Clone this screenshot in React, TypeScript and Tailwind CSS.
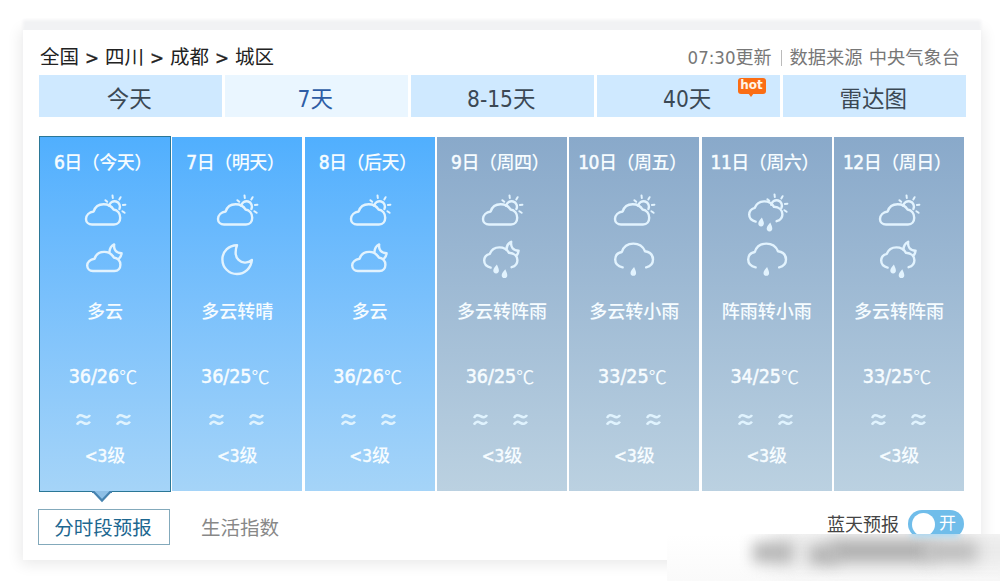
import React from 'react';
import clsx from 'clsx';

type IconName = 'cloudSun' | 'cloudMoon' | 'moon' | 'showerDay' | 'showerNight' | 'rain';

interface Day {
  date: string;
  label: string;
  icons: [IconName, IconName];
  weather: string;
  temp: string;
  tone: 'blue' | 'gray';
  active?: boolean;
}

const days: Day[] = [
  { date: '6', label: '今天', icons: ['cloudSun', 'cloudMoon'], weather: '多云', temp: '36/26', tone: 'blue', active: true },
  { date: '7', label: '明天', icons: ['cloudSun', 'moon'], weather: '多云转晴', temp: '36/25', tone: 'blue' },
  { date: '8', label: '后天', icons: ['cloudSun', 'cloudMoon'], weather: '多云', temp: '36/26', tone: 'blue' },
  { date: '9', label: '周四', icons: ['cloudSun', 'showerNight'], weather: '多云转阵雨', temp: '36/25', tone: 'gray' },
  { date: '10', label: '周五', icons: ['cloudSun', 'rain'], weather: '多云转小雨', temp: '33/25', tone: 'gray' },
  { date: '11', label: '周六', icons: ['showerDay', 'rain'], weather: '阵雨转小雨', temp: '34/25', tone: 'gray' },
  { date: '12', label: '周日', icons: ['cloudSun', 'showerNight'], weather: '多云转阵雨', temp: '33/25', tone: 'gray' },
];

const tabs = ['今天', '7天', '8-15天', '40天', '雷达图'];

const Sun = () => (
  <>
    <path d="M26.2 15.8a5.4 5.4 0 1 1 10.2 3.2" />
    <path
      strokeWidth="2"
      d="M22.4 10.2l1.8 1.6M29.5 5.4l.3 2.6M37.6 7.2l-1.3 2.2M42.4 14.7l-2.5.3M41.6 22.8l-2.2-1.6"
    />
  </>
);

const MoonTip = () => <path d="M26.4 12.2c.2-3.6 1.8-6.4 4.8-7.8c-.8 5.4 2 8.8 7.4 8.8c-.2 2-1 3.8-2.4 5.2" />;

const Drop: React.FC<{ x: number; y: number }> = ({ x, y }) => (
  <path
    transform={`translate(${x} ${y})`}
    d="M.9-4.4C-.8-2.2-2.7-.3-2.7 1.6a2.8 2.8 0 0 0 5.6 0C2.9-.3 1.7-2.2.9-4.4z"
    fill="currentColor"
    stroke="none"
  />
);

const shower = 'M10.6 27.6C6.4 26.6 4.2 24 4.2 20.6c0-3.2 2-5.8 5.6-6.8C11.4 9.6 15 7.4 19.4 7.4c4.4 0 7.6 2 9.6 5.4c5 .4 8.4 3.4 8.4 7.4c0 3.4-2.2 6-5.8 7';

const glyphs: Record<IconName, React.ReactNode> = {
  cloudSun: (
    <>
      <path d="M9 34.5h22c4 0 6.2-3 6.2-6.8c0-4-2.6-7.5-6.7-8.2C28.6 16 25 14.2 20.6 14.2c-5 0-8.6 2.8-9.9 7.3C6.2 22.2 3 25.3 3 29c0 3.2 2.6 5.5 6 5.5z" />
      <Sun />
    </>
  ),
  cloudMoon: (
    <>
      <path d="M9.8 31h21.6c3.8 0 6-2.8 6-6.2c0-3.8-2.6-6.8-6.6-7.3c-1.9-3.4-5.4-5.6-9.6-5.6c-4.8 0-8.4 2.6-9.7 6.9C7.2 19.5 4.2 22.2 4.2 25.6c0 3.1 2.4 5.4 5.6 5.4z" />
      <MoonTip />
    </>
  ),
  moon: <path d="M22 5.2C13.6 5.3 7.4 11.6 7.4 19.4c0 8.2 6.4 14.6 14.6 14.6c7.8 0 13.9-5.6 14.9-14c-2.4 2-4.6 2.8-7.2 2.6c-4.8-.3-8.6-3.9-9-8.8c-.2-3.3.3-6.2 1.3-8.6z" />,
  showerDay: (
    <>
      <g transform="translate(0 4)">
        <path d={shower} />
      </g>
      <g transform="translate(0 -1)">
        <Sun />
      </g>
      <Drop x={16} y={32} />
      <Drop x={24.4} y={37} />
    </>
  ),
  showerNight: (
    <>
      <path d={shower} />
      <g transform="translate(0 -2.6)">
        <MoonTip />
      </g>
      <Drop x={16} y={29} />
      <Drop x={24.4} y={33.6} />
    </>
  ),
  rain: (
    <>
      <path d="M10.6 27.4C5.8 26.4 3.2 23.4 3.2 19.6c0-3.8 2.4-6.8 6.6-7.6C11.4 6.8 15.6 3.6 21.4 3.6c5.4 0 9.6 2.8 11.6 7.6c4.8.8 8 4 8 8.4c0 4-2.4 6.8-6.8 7.8" />
      <Drop x={21.2} y={31.4} />
    </>
  ),
};

const WeatherIcon: React.FC<{ name: IconName }> = ({ name }) => (
  <svg
    width="44"
    height="44"
    viewBox="0 0 44 44"
    fill="none"
    stroke="currentColor"
    strokeWidth="2.4"
    strokeLinecap="round"
    strokeLinejoin="round"
    className="overflow-visible text-[#e2f3fe]"
  >
    {glyphs[name]}
  </svg>
);

const Wind = () => (
  <svg width="15" height="14" viewBox="0 0 15 14" fill="none" stroke="currentColor" strokeWidth="2.5" className="text-[#e0f3fe]">
    <path d="M1 5C2.6 1.6 5 1.8 7.4 3.2S12.4 4.8 14 2" />
    <path d="M1 11.6C2.6 8.2 5 8.4 7.4 9.8S12.4 11.4 14 8.6" />
  </svg>
);

const DayCard: React.FC<{ day: Day }> = ({ day }) => (
  <div
    className={clsx(
      'relative flex flex-col items-center bg-linear-to-b text-[#f6fcff] font-medium text-[18px] leading-6 whitespace-nowrap',
      day.tone === 'blue' ? 'from-[#50affe] to-[#a5d4f8]' : 'from-[#89a9ca] to-[#bbd1e1]',
      day.active && 'outline-[1.5px] outline-[#2b7796]'
    )}
  >
    <div className="mt-[13px] pr-1 tracking-[-0.5px]">
      <span className="text-[19px] [-webkit-text-stroke:0.5px_currentColor]">{day.date}</span>日（{day.label}）
    </div>
    <div className="mt-[15px] flex flex-col gap-1.5">
      <WeatherIcon name={day.icons[0]} />
      <WeatherIcon name={day.icons[1]} />
    </div>
    <div className="mt-4">{day.weather}</div>
    <div className="mt-[40px] flex items-center pr-1 text-[19.5px]">
      <span className="[-webkit-text-stroke:0.5px_currentColor]">{day.temp}</span>
      <span className="pb-px font-['Noto_Sans_CJK_SC',sans-serif] text-[18px] font-normal">℃</span>
    </div>
    <div className="mt-[24px] flex gap-[25px] pr-0.5">
      <Wind />
      <Wind />
    </div>
    <div className="mt-[17px] flex items-center">
      <span className="text-[17px] [-webkit-text-stroke:0.5px_currentColor]">&lt;3</span>级
    </div>
    {day.active && (
      <svg width="20" height="12" viewBox="0 0 20 12" className="absolute left-[52px] top-[354px]">
        <path d="M0 0h20l-10 10z" fill="#8dbfe6" />
        <path d="M0 .8h1.6L10 9.6L18.4.8H20" fill="none" stroke="#4683b0" strokeWidth="2.2" />
      </svg>
    )}
  </div>
);

const App: React.FC = () => {
  return (
    <div className="relative h-[581px] w-[1000px] overflow-hidden bg-white pt-[30px] pl-[23px] font-['DejaVu_Sans_Condensed','Noto_Sans_CJK_SC',sans-serif]">
      <div className="h-[530px] w-[958px] bg-white shadow-[0_-10px_3px_0_#f1f2f4,0_2px_14px_2px_rgba(0,0,0,0.09)]">
        <div className="flex h-[45px] items-center justify-between pt-[11px] pr-[21px] pl-[17px]">
          <div className="flex items-center text-[19.5px] leading-6 text-[#222]">
            {['全国', '四川', '成都', '城区'].map((place, i) => (
              <React.Fragment key={place}>
                {i > 0 && (
                  <span className="w-[26px] text-center text-[18.5px] [-webkit-text-stroke:0.4px_currentColor]">&gt;</span>
                )}
                <span>{place}</span>
              </React.Fragment>
            ))}
          </div>
          <div className="flex items-center text-[18px] leading-6 text-[#777]">
            <span>
              <span className="text-[18.5px]">07:30</span>更新
            </span>
            <span className="mr-[8px] ml-[9px] h-4 w-px bg-[#bbb]" />
            <span className="text-[18.25px]">数据来源 <span className="ml-px">中央气象台</span></span>
          </div>
        </div>

        <div className="ml-[15.5px] grid h-[42px] w-[927.5px] grid-cols-5 gap-[2.5px]">
          {tabs.map((tab) => (
            <div
              key={tab}
              className={clsx(
                'relative flex items-center justify-center pt-[7px] pr-0.5 text-[22.5px]',
                tab === '7天' ? 'bg-[#eaf6ff] text-[#2e5da5]' : 'bg-[#cfe9ff] text-[#3b4854]'
              )}
            >
              {tab}
              {tab === '40天' && (
                <div className="absolute top-[3px] left-[141px] flex h-[16px] w-[28px] items-center justify-center rounded-[3px] bg-[#fb6d14] pb-0.5 font-['DejaVu_Sans',sans-serif] text-[12px] font-bold text-[#fff3e6]">
                  hot
                  <svg width="6" height="4" viewBox="0 0 6 4" className="absolute top-[15px] left-[10px]">
                    <path d="M0 0h6L3 4z" fill="#fb6d14" />
                  </svg>
                </div>
              )}
            </div>
          ))}
        </div>

        <div className="mt-5 ml-[17px] grid h-[354px] w-[924px] grid-cols-7 gap-[2.5px]">
          {days.map((day) => (
            <DayCard key={day.date} day={day} />
          ))}
        </div>

        <div className="mt-[18px] flex items-start pr-[17px] pl-[15px]">
          <div className="flex h-[36px] w-[132px] items-center justify-center border border-[#83a9bb] pt-[3px] pr-0.5 text-[19.5px] text-[#1d6790]">
            分时段预报
          </div>
          <div className="ml-[31px] flex h-[36px] items-center pt-[3px] text-[19.5px] text-[#888]">生活指数</div>
          <div className="ml-auto flex items-center pt-px text-[18px] text-[#444]">
            蓝天预报
            <div className="ml-[9px] flex h-[28px] w-[56px] items-center justify-between rounded-full bg-[#70bdea] pr-[8px] pl-[4px] text-white">
              <span className="size-[23px] rounded-full bg-white" />
              <span className="text-[17px]">开</span>
            </div>
          </div>
        </div>
      </div>

      {/* frosted strip in the corner */}
      <div className="absolute top-[534px] left-[667px] h-[47px] w-[333px] overflow-hidden bg-linear-to-b from-white to-[#fafafa]">
        <div className="absolute -top-1 left-[105px] h-[40px] w-[250px] bg-[#ebebeb] blur-[10px]" />
        <div className="absolute top-[8px] left-[86px] h-[21px] w-[40px] bg-[#b8b8b8] blur-[7px]" />
        <div className="absolute top-[11px] left-[142px] h-[20px] w-[28px] bg-[#b8b8b8] blur-[7px]" />
        <div className="absolute top-[7px] left-[164px] h-[20px] w-[100px] bg-[#aaaaaa] blur-[8px]" />
        <div className="absolute top-[8px] left-[260px] h-[19px] w-[50px] bg-[#b8b8b8] blur-[8px]" />
        <div className="absolute -top-2 left-[244px] h-[11px] w-[48px] bg-[#a9d6f0] blur-[3px]" />
      </div>
    </div>
  );
};

export default App;
